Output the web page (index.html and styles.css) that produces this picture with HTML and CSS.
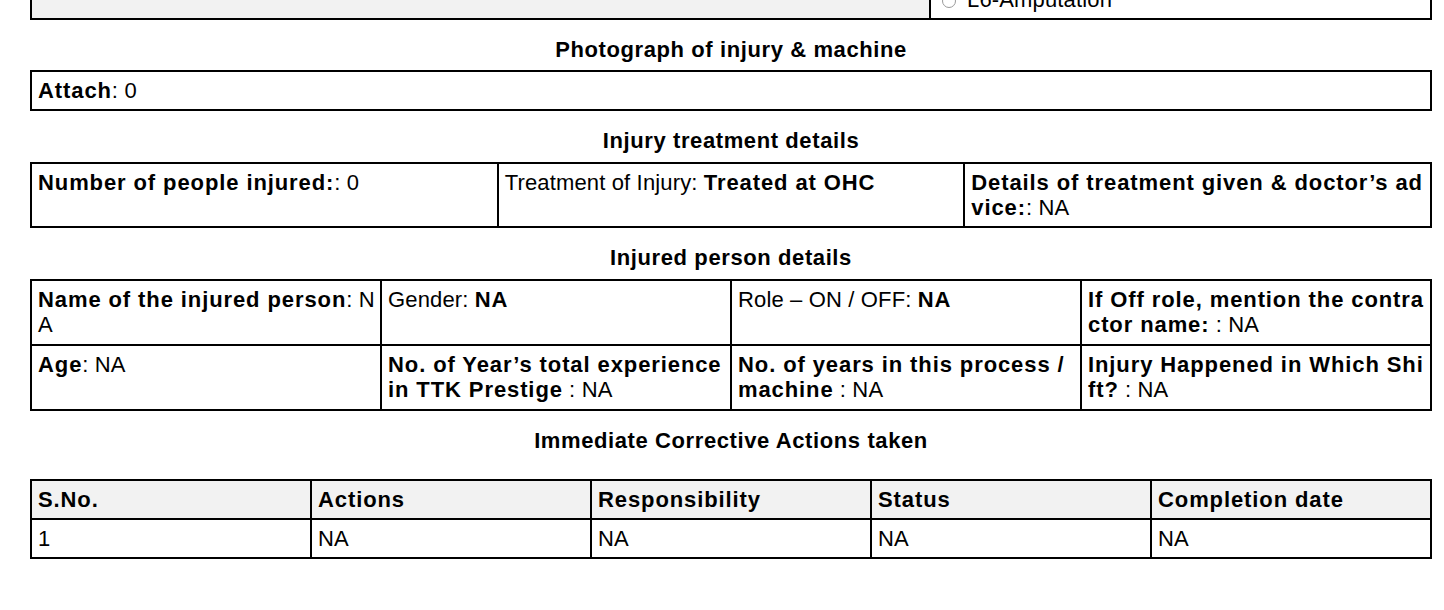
FILE: index.html
```html
<!DOCTYPE html>
<html>
<head>
<meta charset="utf-8">
<title>Injury Report</title>
<link rel="stylesheet" href="styles.css">
</head>
<body>
<div class="page">
  <table class="grid prev">
    <tr>
      <td class="shade"></td>
      <td class="opt-cell"><span class="radio"></span><span class="opt">L6-Amputation</span></td>
    </tr>
  </table>

  <div class="title">Photograph of injury &amp; machine</div>
  <div class="box"><b>Attach</b>: 0</div>

  <div class="title">Injury treatment details</div>
  <table class="grid treat">
    <tr>
      <td><b>Number of people injured:</b>: 0</td>
      <td>Treatment of Injury: <b>Treated at OHC</b></td>
      <td><b>Details of treatment given &amp; doctor’s advice:</b>: NA</td>
    </tr>
  </table>

  <div class="title">Injured person details</div>
  <table class="grid person">
    <tr>
      <td><b>Name of the injured person</b>: NA</td>
      <td>Gender: <b>NA</b></td>
      <td>Role – ON / OFF: <b>NA</b></td>
      <td><b>If Off role, mention the contractor name:</b> : NA</td>
    </tr>
    <tr>
      <td><b>Age</b>: NA</td>
      <td><b>No. of Year’s total experience in TTK Prestige</b> : NA</td>
      <td><b>No. of years in this process / machine</b> : NA</td>
      <td><b>Injury Happened in Which Shift?</b> : NA</td>
    </tr>
  </table>

  <div class="title title-gap">Immediate Corrective Actions taken</div>
  <table class="grid actions">
    <tr class="head">
      <th>S.No.</th>
      <th>Actions</th>
      <th>Responsibility</th>
      <th>Status</th>
      <th>Completion date</th>
    </tr>
    <tr>
      <td>1</td>
      <td>NA</td>
      <td>NA</td>
      <td>NA</td>
      <td>NA</td>
    </tr>
  </table>
</div>
</body>
</html>
```

FILE: styles.css
```css
html, body {
  margin: 0;
  padding: 0;
  background: #ffffff;
}

body {
  font-family: "Liberation Sans", Arial, sans-serif;
  font-size: 22px;
  line-height: 25px;
  letter-spacing: 0.15px;
  color: #000000;
}

.page {
  display: flow-root;
  width: 1402px;
  margin-left: 30px;
}

b, th {
  font-weight: bold;
  letter-spacing: 0.9px;
}

.grid {
  width: 100%;
  table-layout: fixed;
  border-collapse: separate;
  border-spacing: 0;
  border-top: 2px solid #000;
  border-left: 2px solid #000;
}

.grid td, .grid th {
  border-right: 2px solid #000;
  border-bottom: 2px solid #000;
  padding: 6px;
  vertical-align: top;
  text-align: left;
  word-break: break-all;
}

.treat td {
  height: 50px;
}

.person td {
  padding-right: 3px;
  padding-bottom: 7px;
  height: 50px;
}

.prev {
  margin-top: -21px;
}

.prev td.shade {
  width: 885px;
  background: #f2f2f2;
}

.opt-cell {
  white-space: nowrap;
  padding-left: 11px !important;
}

.radio {
  display: inline-block;
  width: 12px;
  height: 12px;
  border: 1px solid #9a9a9a;
  border-radius: 50%;
  margin-right: 11px;
  vertical-align: -1px;
}

.title {
  text-align: center;
  font-weight: bold;
  letter-spacing: 0.6px;
  padding: 17px 0 8px;
}

.title + .grid {
  margin-top: 1px;
}

.title-gap {
  padding-bottom: 25px;
}

.box {
  border: 2px solid #000;
  padding: 6px;
}

.actions .head th {
  background: #f2f2f2;
}

.actions th, .actions td {
  padding-top: 6px;
  padding-bottom: 6px;
}
```
